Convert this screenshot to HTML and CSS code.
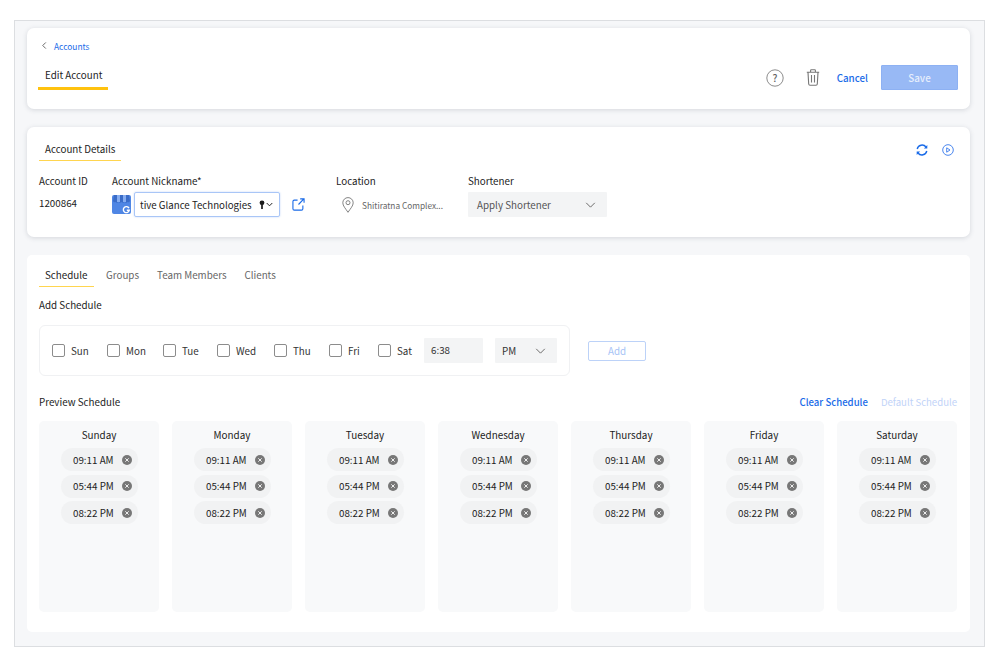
FILE: index.html
```html
<!DOCTYPE html>
<html lang="en">
<head>
<meta charset="utf-8">
<title>Edit Account</title>
<link rel="stylesheet" href="styles.css">
</head>
<body>
<div class="frame">
  <section class="card head-card">
    <div class="crumb">
      <svg class="crumb-icon" viewBox="0 0 8 10"><path d="M5.5 1.5 2 5l3.5 3.5"/></svg>
      <a class="link">Accounts</a>
    </div>
    <div class="head-row">
      <div class="page-tab">Edit Account</div>
      <div class="actions">
        <svg class="help" viewBox="0 0 18 18"><circle cx="9" cy="9" r="8.2"/><text x="9" y="12.6" text-anchor="middle">?</text></svg>
        <svg class="trash" viewBox="0 0 14 17"><path d="M.8 3.2h12.4M4.6 3V1.5q0-.7.7-.7h3.4q.7 0 .7.7V3M2 3.4l.7 11.6q.1 1.2 1.3 1.2h6q1.2 0 1.3-1.2L12 3.4M5.5 6v7.5M8.5 6v7.5"/></svg>
        <a class="cancel">Cancel</a>
        <button class="save">Save</button>
      </div>
    </div>
  </section>

  <section class="card details-card">
    <div class="details-top">
      <div class="details-tab">Account Details</div>
      <div class="details-icons">
        <svg class="sync" viewBox="0 0 12 12"><path d="M1.2 5A5 5 0 0 1 10 3M10.8 7A5 5 0 0 1 2 9"/><path class="fill" d="M11.3 .9v3.6H7.9zM.7 11.1V7.5h3.4z"/></svg>
        <svg class="play" viewBox="0 0 12 12"><circle cx="6" cy="6" r="5.3"/><path d="M4.7 3.8 8 6 4.7 8.2z"/></svg>
      </div>
    </div>
    <div class="fields">
      <div class="field f-id">
        <div class="label">Account ID</div>
        <div class="id-value">1200864</div>
      </div>
      <div class="field f-nick">
        <div class="label">Account Nickname*</div>
        <div class="nick-row">
          <svg class="gmb" viewBox="0 0 19 19">
            <rect width="19" height="19" rx="2" fill="#4f86e4"/>
            <path d="M2 0h15l1 6q-1 2-2.600 1-1 1.500-2.900 0-1.500 1.500-3 0-1.500 1.500-3 0-1.800 1.500-2.900 0Q2 8 1 6z" fill="#3a6cc8"/>
            <path d="M5 0h3v7H5zM11 0h3v7h-3z" fill="#86adf0"/>
            <circle cx="14.500" cy="14.500" r="4.500" fill="#4f86e4"/>
            <path d="M17 13.200a3 3 0 1 0 .3 2H14.800" fill="none" stroke="#fff" stroke-width="1.400"/>
          </svg>
          <div class="nick-input">
            <span class="nick-text">tive Glance Technologies</span>
            <svg class="key" viewBox="0 0 7 11"><circle cx="3.500" cy="3" r="2.800"/><path d="M2.500 5h2v4.200L3.500 10.500 2.500 9.200z"/></svg>
            <svg class="mini-chev" viewBox="0 0 8 5"><path d="M.8.8 4 4 7.200.8"/></svg>
          </div>
          <svg class="ext" viewBox="0 0 14 14"><path d="M6 2.300H2.500Q1 2.300 1 3.800v7.700Q1 13 2.500 13h7.700q1.500 0 1.500-1.500V8M7 7l5.500-5.800M8.800 1h4.200v4.200"/></svg>
        </div>
      </div>
      <div class="field f-loc">
        <div class="label">Location</div>
        <div class="loc-row">
          <svg class="pin" viewBox="0 0 12 16"><path d="M6 15.300C3.500 11.500 .8 8.800.8 5.800a5.200 5.200 0 0 1 10.400 0C11.200 8.800 8.500 11.500 6 15.300z"/><circle cx="6" cy="5.700" r="2"/></svg>
          <span class="loc-text">Shitiratna Complex...</span>
        </div>
      </div>
      <div class="field f-short">
        <div class="label">Shortener</div>
        <div class="select short-select">
          <span>Apply Shortener</span>
          <svg class="chev" viewBox="0 0 12 7"><path d="M1 1l5 5 5-5"/></svg>
        </div>
      </div>
    </div>
  </section>

  <section class="card main-card">
    <nav class="tabs">
      <span class="tab active">Schedule</span>
      <span class="tab">Groups</span>
      <span class="tab">Team Members</span>
      <span class="tab">Clients</span>
    </nav>
    <div class="section-title add-title">Add Schedule</div>
    <div class="add-row">
      <div class="add-box">
        <label class="day d-sun"><i class="check"></i>Sun</label>
        <label class="day d-mon"><i class="check"></i>Mon</label>
        <label class="day d-tue"><i class="check"></i>Tue</label>
        <label class="day d-wed"><i class="check"></i>Wed</label>
        <label class="day d-thu"><i class="check"></i>Thu</label>
        <label class="day d-fri"><i class="check"></i>Fri</label>
        <label class="day d-sat"><i class="check"></i>Sat</label>
        <div class="time-input">6:38</div>
        <div class="select ampm">
          <span>PM</span>
          <svg class="chev" viewBox="0 0 12 7"><path d="M1 1l5 5 5-5"/></svg>
        </div>
      </div>
      <button class="add-btn">Add</button>
    </div>
    <div class="preview-head">
      <div class="section-title">Preview Schedule</div>
      <div class="preview-links">
        <a class="clear">Clear Schedule</a>
        <a class="default">Default Schedule</a>
      </div>
    </div>
    <div class="week" id="week">
      <div class="col"><div class="col-title">Sunday</div><div class="pill">09:11 AM<svg class="x" viewBox="0 0 10 10"><circle cx="5" cy="5" r="5"/><path d="M3.300 3.300l3.400 3.400M6.700 3.300 3.300 6.700"/></svg></div><div class="pill">05:44 PM<svg class="x" viewBox="0 0 10 10"><circle cx="5" cy="5" r="5"/><path d="M3.300 3.300l3.400 3.400M6.700 3.300 3.300 6.700"/></svg></div><div class="pill">08:22 PM<svg class="x" viewBox="0 0 10 10"><circle cx="5" cy="5" r="5"/><path d="M3.300 3.300l3.400 3.400M6.700 3.300 3.300 6.700"/></svg></div></div>
      <div class="col"><div class="col-title">Monday</div><div class="pill">09:11 AM<svg class="x" viewBox="0 0 10 10"><circle cx="5" cy="5" r="5"/><path d="M3.300 3.300l3.400 3.400M6.700 3.300 3.300 6.700"/></svg></div><div class="pill">05:44 PM<svg class="x" viewBox="0 0 10 10"><circle cx="5" cy="5" r="5"/><path d="M3.300 3.300l3.400 3.400M6.700 3.300 3.300 6.700"/></svg></div><div class="pill">08:22 PM<svg class="x" viewBox="0 0 10 10"><circle cx="5" cy="5" r="5"/><path d="M3.300 3.300l3.400 3.400M6.700 3.300 3.300 6.700"/></svg></div></div>
      <div class="col"><div class="col-title">Tuesday</div><div class="pill">09:11 AM<svg class="x" viewBox="0 0 10 10"><circle cx="5" cy="5" r="5"/><path d="M3.300 3.300l3.400 3.400M6.700 3.300 3.300 6.700"/></svg></div><div class="pill">05:44 PM<svg class="x" viewBox="0 0 10 10"><circle cx="5" cy="5" r="5"/><path d="M3.300 3.300l3.400 3.400M6.700 3.300 3.300 6.700"/></svg></div><div class="pill">08:22 PM<svg class="x" viewBox="0 0 10 10"><circle cx="5" cy="5" r="5"/><path d="M3.300 3.300l3.400 3.400M6.700 3.300 3.300 6.700"/></svg></div></div>
      <div class="col"><div class="col-title">Wednesday</div><div class="pill">09:11 AM<svg class="x" viewBox="0 0 10 10"><circle cx="5" cy="5" r="5"/><path d="M3.300 3.300l3.400 3.400M6.700 3.300 3.300 6.700"/></svg></div><div class="pill">05:44 PM<svg class="x" viewBox="0 0 10 10"><circle cx="5" cy="5" r="5"/><path d="M3.300 3.300l3.400 3.400M6.700 3.300 3.300 6.700"/></svg></div><div class="pill">08:22 PM<svg class="x" viewBox="0 0 10 10"><circle cx="5" cy="5" r="5"/><path d="M3.300 3.300l3.400 3.400M6.700 3.300 3.300 6.700"/></svg></div></div>
      <div class="col"><div class="col-title">Thursday</div><div class="pill">09:11 AM<svg class="x" viewBox="0 0 10 10"><circle cx="5" cy="5" r="5"/><path d="M3.300 3.300l3.400 3.400M6.700 3.300 3.300 6.700"/></svg></div><div class="pill">05:44 PM<svg class="x" viewBox="0 0 10 10"><circle cx="5" cy="5" r="5"/><path d="M3.300 3.300l3.400 3.400M6.700 3.300 3.300 6.700"/></svg></div><div class="pill">08:22 PM<svg class="x" viewBox="0 0 10 10"><circle cx="5" cy="5" r="5"/><path d="M3.300 3.300l3.400 3.400M6.700 3.300 3.300 6.700"/></svg></div></div>
      <div class="col"><div class="col-title">Friday</div><div class="pill">09:11 AM<svg class="x" viewBox="0 0 10 10"><circle cx="5" cy="5" r="5"/><path d="M3.300 3.300l3.400 3.400M6.700 3.300 3.300 6.700"/></svg></div><div class="pill">05:44 PM<svg class="x" viewBox="0 0 10 10"><circle cx="5" cy="5" r="5"/><path d="M3.300 3.300l3.400 3.400M6.700 3.300 3.300 6.700"/></svg></div><div class="pill">08:22 PM<svg class="x" viewBox="0 0 10 10"><circle cx="5" cy="5" r="5"/><path d="M3.300 3.300l3.400 3.400M6.700 3.300 3.300 6.700"/></svg></div></div>
      <div class="col"><div class="col-title">Saturday</div><div class="pill">09:11 AM<svg class="x" viewBox="0 0 10 10"><circle cx="5" cy="5" r="5"/><path d="M3.300 3.300l3.400 3.400M6.700 3.300 3.300 6.700"/></svg></div><div class="pill">05:44 PM<svg class="x" viewBox="0 0 10 10"><circle cx="5" cy="5" r="5"/><path d="M3.300 3.300l3.400 3.400M6.700 3.300 3.300 6.700"/></svg></div><div class="pill">08:22 PM<svg class="x" viewBox="0 0 10 10"><circle cx="5" cy="5" r="5"/><path d="M3.300 3.300l3.400 3.400M6.700 3.300 3.300 6.700"/></svg></div></div>
    </div>
  </section>
</div>
</body>
</html>
```
FILE: styles.css
```css
* { box-sizing: border-box; }
html, body { margin: 0; height: 666px; overflow: hidden; background: #fff; }
body {
  font-family: "Noto Sans CJK JP", "Noto Sans", sans-serif;
  font-size: 9.800px;
  color: #1c1c1c;
  padding: 20px 14px;
}
svg { display: block; flex: none; fill: none; }
a { cursor: pointer; }
.frame {
  width: 971px;
  height: 627px;
  border: 1px solid #dcdee1;
  background: #f6f7f9;
  padding: 7px 14px 0 12px;
  display: flex;
  flex-direction: column;
}
.card { background: #fff; border-radius: 7px; }
.head-card {
  height: 81px;
  box-shadow: 0 1px 5px rgba(60, 70, 90, .18);
  padding: 11px 12px 0 11px;
  margin-bottom: 18px;
}
.crumb { display: flex; align-items: center; gap: 6px; height: 13px; padding-left: 3px; }
.crumb-icon { width: 7px; height: 9px; }
.crumb-icon path { stroke: #555; stroke-width: 1; }
.link { color: #1a6be8; font-size: 8.400px; }
.head-row { display: flex; justify-content: space-between; height: 43px; margin-top: 6px; }
.page-tab {
  align-self: flex-start;
  width: 70px;
  height: 32px;
  padding: 9px 0 0 7px;
  font-size: 9.800px;
  line-height: 17px;
  color: #1c1c1c;
  border-bottom: 3px solid #ffc20e;
  white-space: nowrap;
}
.actions { display: flex; align-items: center; height: 25px; margin-top: 7px; }
.help { width: 18px; height: 18px; margin-right: 22px; }
.help circle { stroke: #8c8c8c; stroke-width: 1; }
.help text { fill: #666; font-size: 10px; font-weight: 500; font-family: "Noto Sans CJK JP", sans-serif; }
.trash { width: 14px; height: 17px; margin-right: 17px; }
.trash path { stroke: #777; stroke-width: 1.100; }
.cancel { color: #1a6be8; font-size: 9.800px; font-weight: 500; margin-right: 13px; }
.save {
  width: 77px;
  height: 25px;
  border: 1px solid #8db1f3;
  border-radius: 1px;
  background: #98b9f5;
  color: #e6eefc;
  font: 500 9.800px "Noto Sans CJK JP", sans-serif;
  padding: 0;
}
.details-card {
  height: 110px;
  box-shadow: 0 1px 5px rgba(60, 70, 90, .18);
  padding: 11px 16px 0 12px;
  margin-bottom: 18px;
}
.details-top { display: flex; justify-content: space-between; }
.details-tab {
  width: 82px;
  height: 23px;
  padding: 2px 0 0 6px;
  line-height: 18px;
  font-size: 9.800px;
  border-bottom: 1px solid #ffd54f;
  white-space: nowrap;
}
.details-icons { display: flex; gap: 14px; align-items: center; height: 23px; }
.sync { width: 12px; height: 12px; }
.sync path { stroke: #1a6be8; stroke-width: 1.400; }
.sync path.fill { fill: #1a6be8; stroke: none; }
.play { width: 12px; height: 12px; }
.play circle, .play path { stroke: #4a86ee; stroke-width: 1; }
.fields { display: flex; margin-top: 12px; }
.field { display: flex; flex-direction: column; }
.label { font-size: 9.800px; line-height: 16px; height: 16px; white-space: nowrap; }
.f-id { width: 73px; }
.id-value { margin-top: 6px; line-height: 16px; font-size: 9.800px; }
.f-nick { width: 224px; }
.nick-row { display: flex; align-items: center; margin-top: 3px; }
.gmb { width: 19px; height: 19px; margin-right: 3px; }
.nick-input {
  width: 146px;
  height: 25px;
  border: 1.500px solid #a9c6f7;
  border-radius: 2px;
  display: flex;
  align-items: center;
  padding: 0 6px 0 5px;
  box-shadow: 0 0 2px rgba(100, 150, 240, .4);
}
.nick-text { font-size: 9.700px; white-space: nowrap; }
.key { width: 6px; height: 10px; margin-left: auto; margin-right: 1px; fill: #1c1c1c; }
.mini-chev { width: 7px; height: 5px; }
.mini-chev path { stroke: #1c1c1c; stroke-width: 1.100; }
.ext { width: 13px; height: 13px; margin-left: 12px; }
.ext path { stroke: #1a6be8; stroke-width: 1.200; }
.f-loc { width: 132px; }
.loc-row { display: flex; align-items: center; height: 25px; margin-top: 3px; padding-left: 6px; }
.pin { width: 12px; height: 16px; margin-right: 8px; }
.pin path, .pin circle { stroke: #777; stroke-width: .9; }
.loc-text { font-size: 8.300px; color: #666; white-space: nowrap; }
.select {
  display: flex;
  align-items: center;
  justify-content: space-between;
  background: #f3f4f5;
  border-radius: 1px;
  color: #555;
}
.short-select { width: 139px; height: 25px; margin-top: 3px; padding: 0 11px 0 9px; font-size: 9.800px; }
.chev { width: 11px; height: 6px; }
.chev path { stroke: #555; stroke-width: 1; }
.main-card { height: 377px; border-radius: 5px; padding: 12px 12px 0 12px; }
.tabs { display: flex; height: 20px; }
.tab { color: #666; font-size: 9.800px; line-height: 17px; padding: 0 6px; margin-right: 6px; white-space: nowrap; }
.tab.active { color: #1c1c1c; border-bottom: 1px solid #ffd54f; width: 55px; }
.section-title { font-size: 9.800px; line-height: 16px; }
.add-title { margin-top: 10px; }
.add-row { display: flex; align-items: center; margin-top: 12px; }
.add-box {
  width: 531px;
  height: 51px;
  border: 1.500px solid #f0f1f3;
  border-radius: 6px;
  display: flex;
  align-items: center;
  padding-left: 12px;
}
.day { display: flex; align-items: center; gap: 6px; font-size: 9.800px; color: #333; }
.check { display: block; width: 13px; height: 13px; border: 1px solid #8c8c8c; border-radius: 2px; }
.d-sun { width: 55px; } .d-mon { width: 56px; } .d-tue { width: 54px; } .d-wed { width: 57px; }
.d-thu { width: 55px; } .d-fri { width: 49px; } .d-sat { width: 46px; }
.time-input {
  width: 59px;
  height: 25px;
  background: #f3f4f5;
  border-radius: 1px;
  line-height: 24px;
  padding-left: 7px;
  color: #333;
  font-size: 9.800px;
  margin-right: 12px;
}
.ampm { width: 62px; height: 25px; padding: 0 11px 0 7px; font-size: 9.800px; color: #333; }
.add-btn {
  width: 58px;
  height: 20px;
  margin-left: 18px;
  background: #fff;
  border: 1.500px solid #bcd2f8;
  border-radius: 2px;
  color: #a7c4f6;
  font: 9.800px "Noto Sans CJK JP", sans-serif;
  padding: 0;
}
.preview-head { display: flex; justify-content: space-between; align-items: center; margin-top: 18px; height: 16px; }
.preview-links { display: flex; gap: 13px; font-size: 9.600px; margin-right: 1px; }
.clear { color: #1a6be8; font-weight: 500; }
.default { color: #bfd3f8; }
.week { display: flex; gap: 13px; margin-top: 11px; }
.col {
  width: 120px;
  height: 191px;
  background: #f8f9fa;
  border-radius: 5px;
  display: flex;
  flex-direction: column;
  align-items: center;
  padding-top: 6px;
}
.col-title { font-size: 9.900px; line-height: 16px; height: 21px; }
.pill {
  width: 77px;
  height: 23px;
  margin-bottom: 3.500px;
  border-radius: 12px;
  background: #f1f2f3;
  display: flex;
  align-items: center;
  justify-content: space-between;
  padding: 0 6px 0 12.500px;
  font-size: 9.800px;
  white-space: nowrap;
}
.x { width: 10px; height: 10px; }
.x circle { fill: #777; }
.x path { stroke: #eee; stroke-width: 1; }
```
